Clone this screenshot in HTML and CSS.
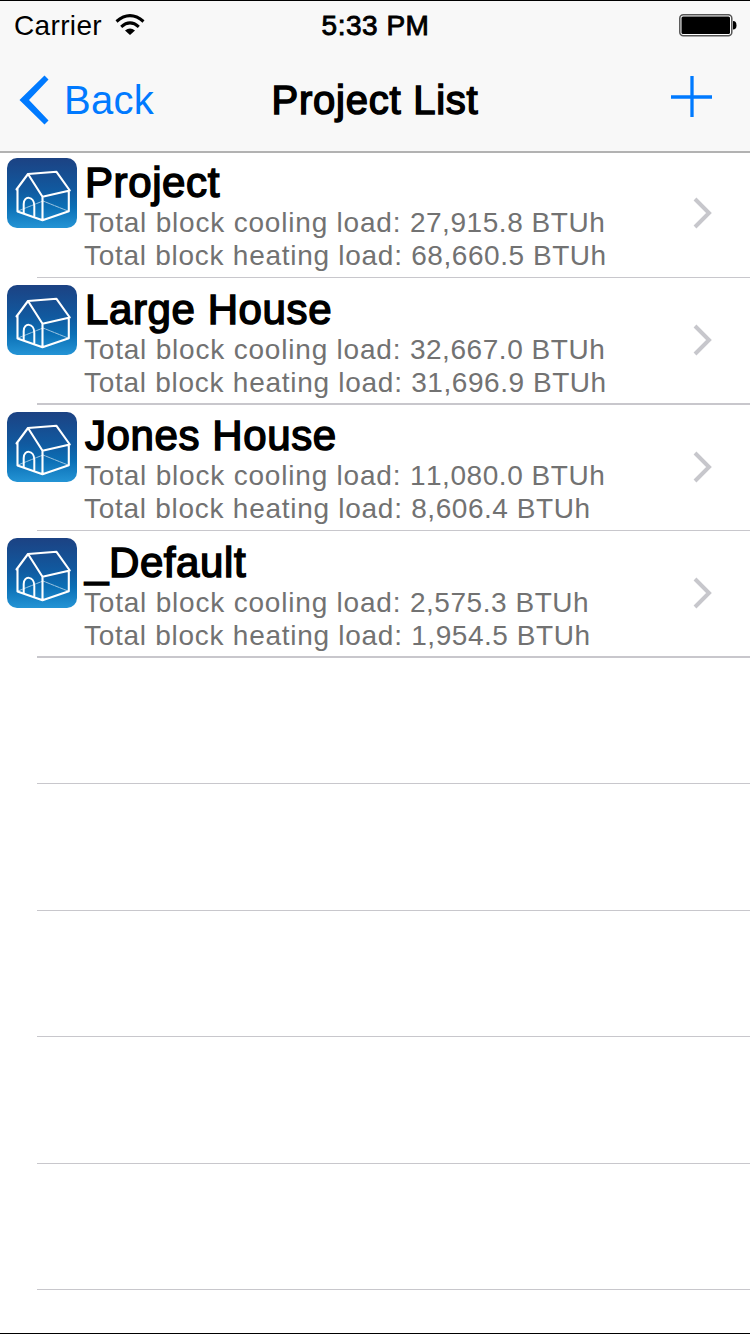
FILE: index.html
```html
<!DOCTYPE html>
<html lang="en">
<head>
<meta charset="utf-8">
<title>Project List</title>
<link rel="stylesheet" href="styles.css">
</head>
<body>
<svg class="defs" width="0" height="0">
  <defs>
    <linearGradient id="sky" x1="0" y1="0" x2="0" y2="1">
      <stop offset="0" stop-color="#1c4283"/>
      <stop offset="0.45" stop-color="#11599f"/>
      <stop offset="0.7" stop-color="#0b6fb5"/>
      <stop offset="1" stop-color="#2494d5"/>
    </linearGradient>
    <symbol id="house" viewBox="0 0 70 70">
      <rect width="70" height="70" rx="10" fill="url(#sky)"/>
      <g fill="none" stroke="#fff" stroke-linejoin="round" stroke-linecap="round">
        <path d="M11 53 36 43 61 53" stroke-width="0.8" stroke-dasharray="4 1" opacity="0.75"/>
        <path d="M9.500 31.500 21 16 49.500 13.800 62.800 32.500 35.500 38.700 21 16M10.500 30V53.500L35.500 62.300 61.800 53.300V33M35.500 38.700V62" stroke-width="2.100"/>
        <path d="M16.700 55V46C16.700 37 27.300 38 27.300 48V58" stroke-width="2"/>
      </g>
    </symbol>
    <symbol id="chevron" viewBox="0 0 20 32">
      <path d="M2 2 16 16 2 30" fill="none" stroke="#c7c7cc" stroke-width="4"/>
    </symbol>
  </defs>
</svg>
<div class="screen">
  <header class="header">
    <div class="status">
      <div class="carrier"><span class="carrier-name">Carrier</span>
        <svg class="wifi" width="30" height="22" viewBox="0 0 30 22"><g fill="none" stroke="#000" stroke-width="3"><path d="M1.500 7.500Q15-4.300 28.500 7.500"/><path d="M6.200 12.800Q15 5 23.800 12.800"/></g><path d="M10 16.500Q15 12.500 20 16.500L15 21Z"/></svg>
      </div>
      <div class="time">5:33 PM</div>
      <svg class="battery" width="58" height="23" viewBox="0 0 58 23"><rect x="0.800" y="0.800" width="52" height="21" rx="3.500" fill="#fff" stroke="#555" stroke-width="1.500"/><rect x="2.500" y="2.500" width="48.500" height="17.500" rx="1.500"/><path d="M54 7Q57.500 7 57.500 11.300T54 15.600Z"/></svg>
    </div>
    <nav class="nav">
      <div class="back"><svg class="back-arrow" width="30" height="50" viewBox="0 0 30 50"><path d="M.5 25 25.500 0.500 29.500 4.500 10 25 29.500 45.500 25.500 49.500Z" fill="#007aff"/></svg><span class="back-label">Back</span></div>
      <h1 class="nav-title">Project List</h1>
      <svg class="add" width="41" height="41" viewBox="0 0 41 41"><path d="M0 21H41M21 0V41" stroke="#007aff" stroke-width="3.300"/></svg>
    </nav>
  </header>
  <main class="list">
    <section class="row"><svg class="app-icon"><use href="#house"/></svg><div class="text"><h2 class="name">Project</h2><p class="detail cooling">Total block cooling load: <span class="value">27,915.8 BTUh</span></p><p class="detail">Total block heating load: <span class="value">68,660.5 BTUh</span></p></div><svg class="chevron"><use href="#chevron"/></svg></section>
    <section class="row thick"><svg class="app-icon"><use href="#house"/></svg><div class="text"><h2 class="name">Large House</h2><p class="detail cooling">Total block cooling load: <span class="value">32,667.0 BTUh</span></p><p class="detail">Total block heating load: <span class="value">31,696.9 BTUh</span></p></div><svg class="chevron"><use href="#chevron"/></svg></section>
    <section class="row short raised"><svg class="app-icon"><use href="#house"/></svg><div class="text"><h2 class="name">Jones House</h2><p class="detail cooling">Total block cooling load: <span class="value">11,080.0 BTUh</span></p><p class="detail">Total block heating load: <span class="value">8,606.4 BTUh</span></p></div><svg class="chevron"><use href="#chevron"/></svg></section>
    <section class="row thick"><svg class="app-icon"><use href="#house"/></svg><div class="text"><h2 class="name">_Default</h2><p class="detail cooling">Total block cooling load: <span class="value">2,575.3 BTUh</span></p><p class="detail">Total block heating load: <span class="value">1,954.5 BTUh</span></p></div><svg class="chevron"><use href="#chevron"/></svg></section>
    <div class="row short"></div>
    <div class="row"></div>
    <div class="row short"></div>
    <div class="row"></div>
    <div class="row short"></div>
  </main>
</div>
</body>
</html>
```
FILE: styles.css
```css
* { box-sizing: border-box; }
body { margin: 0; background: #fff; font-family: "Liberation Sans", Arial, sans-serif; color: #000; }
.defs { position: absolute; }
.screen { width: 750px; height: 1334px; display: flex; flex-direction: column; overflow: hidden; border-top: 1px solid #000; border-bottom: 1px solid #000; }
.header { flex: none; height: 150px; background: #f8f8f8; box-shadow: 0 2px #b2b2b2; z-index: 1; }
.status { height: 48px; padding: 0 13px 0 14px; display: grid; grid-template-columns: 1fr auto 1fr; align-items: center; font-size: 28px; line-height: 48px; }
.carrier { display: flex; align-items: center; gap: 13px; padding-top: 1px; }
.carrier-name { letter-spacing: 0.35px; }
.wifi { margin-bottom: 2px; }
.time { -webkit-text-stroke: 0.9px #000; letter-spacing: 0.5px; padding-top: 1px; }
.battery { justify-self: end; }
.nav { height: 102px; padding: 0 38px; display: grid; grid-template-columns: 1fr auto 1fr; align-items: center; }
.back { display: flex; align-items: center; gap: 15px; margin-left: -19px; color: #007aff; font-size: 40px; }
.back-label { letter-spacing: 0.3px; }
.nav-title { margin: 0; font-size: 40px; font-weight: 400; letter-spacing: 0.75px; -webkit-text-stroke: 1.5px #000; }
.add { justify-self: end; margin-bottom: 8px; }
.list { flex: 1; overflow: hidden; }
.row { height: 127px; padding: 7px 37px 0 7px; display: flex; gap: 7px; background: linear-gradient(#c8c7cc, #c8c7cc) 37px 100% / 100% 1px no-repeat; }
.row.thick { background-size: 100% 2px; }
.row.short { height: 126px; }
.app-icon { width: 70px; height: 70px; flex: none; }
.text { flex: 1; white-space: nowrap; }
.raised .text { margin-top: -1px; }
.name { margin: 0; padding: 1px 0 0 1px; font-size: 42px; line-height: 47px; font-weight: 400; letter-spacing: 0.6px; -webkit-text-stroke: 1.5px #000; }
.detail { margin: 0; font-size: 28px; line-height: 33px; color: #727272; letter-spacing: 0.73px; }
.cooling { letter-spacing: 0.8px; }
.value { letter-spacing: 0.55px; font-kerning: none; }
.chevron { width: 20px; height: 32px; margin-top: 39px; flex: none; }
```
